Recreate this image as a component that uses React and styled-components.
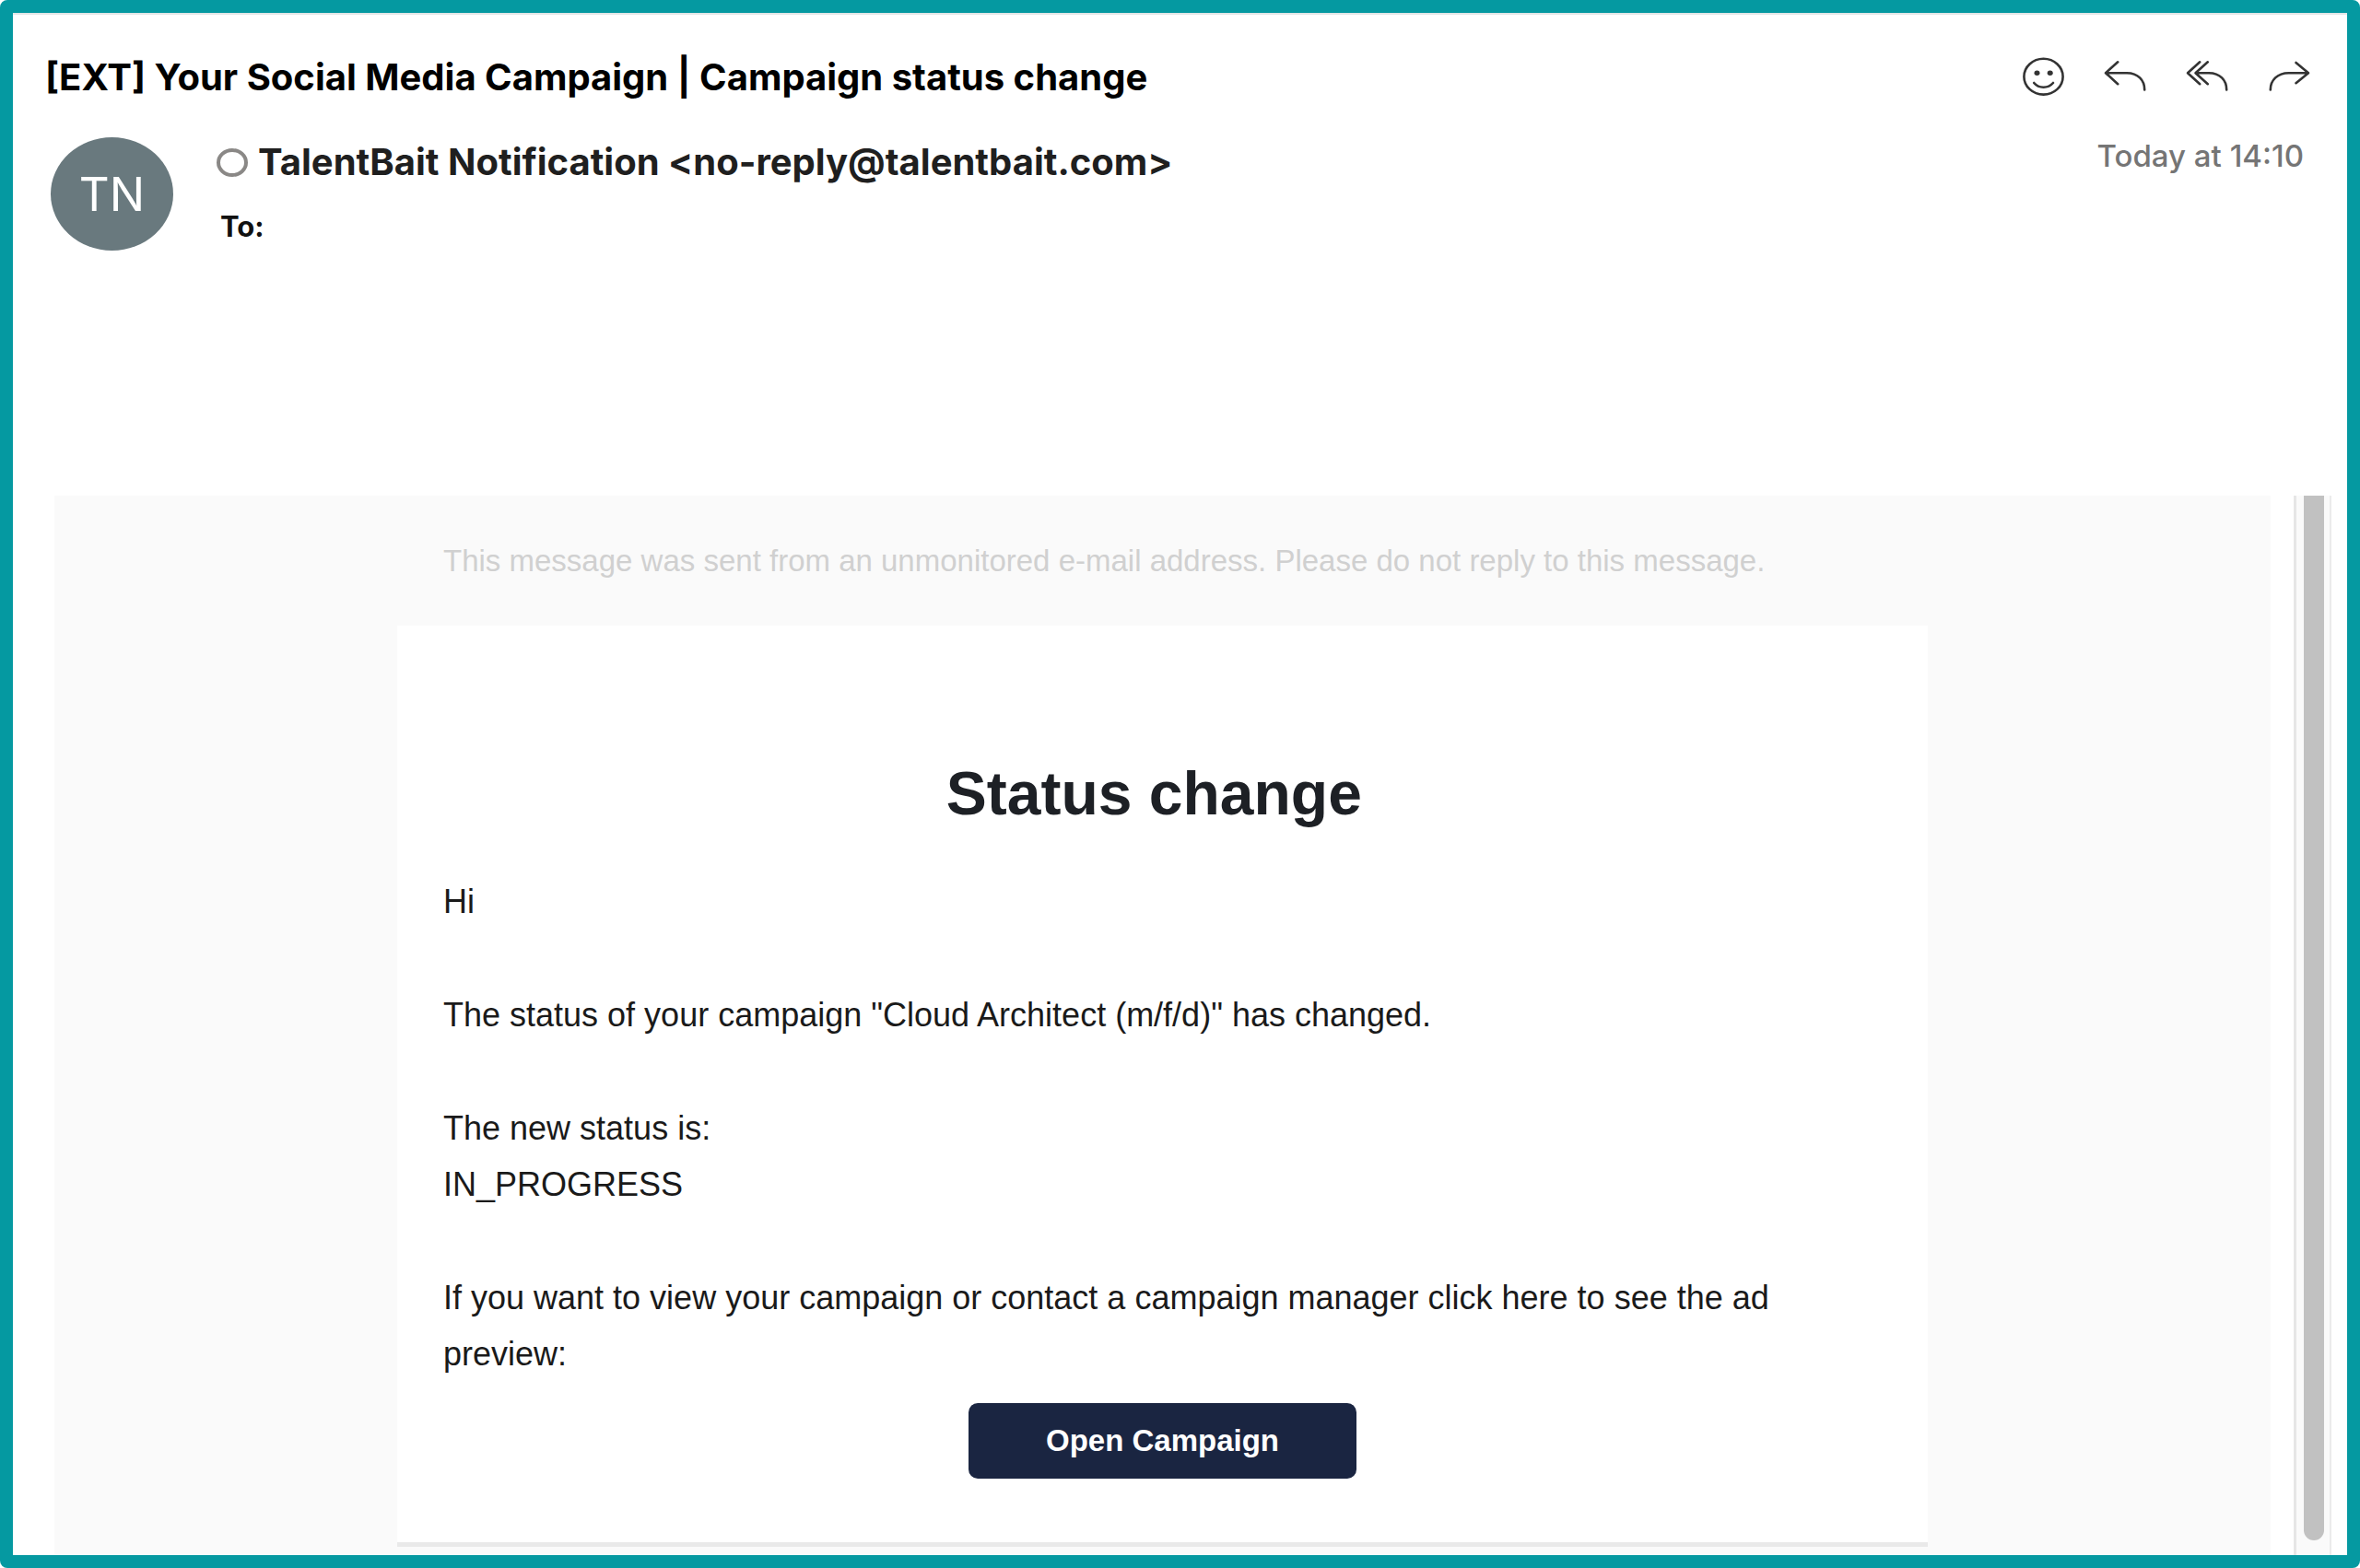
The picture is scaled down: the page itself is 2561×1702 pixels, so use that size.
import React from 'react';
import styled, { createGlobalStyle } from 'styled-components';

const GlobalStyle = createGlobalStyle`
  * {
    box-sizing: border-box;
  }
  body {
    margin: 0;
    background: #ffffff;
  }
`;

const uiFont = 'Inter, "Liberation Sans", sans-serif';
const mailFont = '"Liberation Sans", Arial, sans-serif';

const MailWindow = styled.div`
  min-height: 100vh;
  display: flex;
  flex-direction: column;
  border: 14px solid #0599a1;
  border-radius: 8px;
  box-shadow: inset 0 2px 0 #e2e6e6;
  background: #ffffff;
  font-family: ${uiFont};
`;

const Header = styled.header`
  padding: 46px 40px 266px 35px;
`;

const TitleBar = styled.div`
  display: flex;
  align-items: center;
  justify-content: space-between;
`;

const Subject = styled.h1`
  margin: 0;
  font-size: 40px;
  line-height: 48px;
  font-weight: 700;
  color: #000000;
`;

const Actions = styled.div`
  display: flex;
  gap: 43px;
`;

const ActionButton = styled.button`
  padding: 0;
  border: none;
  background: none;
  color: #333333;
  cursor: pointer;

  svg {
    display: block;
    width: 46px;
    height: 44px;
    fill: none;
    stroke: currentColor;
    stroke-width: 2.6;
    stroke-linecap: round;
    stroke-linejoin: round;
  }
`;

const SenderBar = styled.div`
  display: flex;
  align-items: flex-start;
  margin-top: 41px;
  padding: 0 7px 0 6px;
`;

const Avatar = styled.div`
  display: flex;
  align-items: center;
  justify-content: center;
  width: 133px;
  height: 123px;
  border-radius: 50%;
  background: #69797e;
  color: #ffffff;
  font-size: 51px;
`;

const SenderInfo = styled.div`
  flex: 1;
  display: flex;
  flex-direction: column;
  gap: 26px;
  padding-top: 3px;
  padding-left: 47px;
`;

const SenderLine = styled.div`
  display: flex;
  align-items: center;
  gap: 11px;
`;

const ReadMarker = styled.input`
  appearance: none;
  width: 34px;
  height: 31px;
  margin: 0;
  border: 4px solid #8a8886;
  border-radius: 50%;
  background: #ffffff;
  cursor: pointer;
`;

const Sender = styled.label`
  font-size: 40px;
  line-height: 48px;
  font-weight: 700;
  color: #1f1f1f;
`;

const Recipients = styled.div`
  padding-left: 4px;
  font-size: 31px;
  line-height: 40px;
  font-weight: 700;
  color: #111111;
`;

const SentAt = styled.time`
  font-size: 33px;
  line-height: 40px;
  font-weight: 500;
  color: #757575;
`;

const Reading = styled.main`
  flex: 1;
  display: flex;
  padding: 0 17px 0 45px;
`;

const Message = styled.article`
  flex: 1;
  padding: 47px 40px 9px;
  background: #fafafa;
  font-family: ${mailFont};
`;

const Column = styled.div`
  max-width: 1661px;
  margin: 0 auto;
`;

const Notice = styled.p`
  margin: 0 0 46px;
  padding: 0 50px;
  font-size: 33px;
  line-height: 48px;
  color: #d0d0d0;
`;

const Card = styled.section`
  padding: 142px 50px 69px;
  border-bottom: 5px solid #e9e9e9;
  background: #ffffff;
`;

const CardTitle = styled.h2`
  margin: 0 0 47px;
  font-size: 66px;
  line-height: 80px;
  text-align: center;
  color: #1d2025;
`;

const Paragraph = styled.p`
  margin: 0 0 ${(props) => (props.$last ? '23px' : '62px')};
  font-size: 36px;
  line-height: 61px;
  color: #1a1a1a;
`;

const OpenLink = styled.a`
  display: block;
  width: fit-content;
  margin: 0 auto;
  padding: 17px 84px;
  border-radius: 10px;
  background: #1a2541;
  color: #ffffff;
  font-size: 33px;
  line-height: 48px;
  font-weight: bold;
  text-decoration: none;
`;

const ScrollTrack = styled.div`
  width: 41px;
  margin-left: 25px;
  padding: 0 6px 16px 8px;
  border-left: 3px solid #e6e6e6;
  border-right: 2px solid #ebebeb;
  background: #fafafa;
`;

const ScrollThumb = styled.div`
  height: 100%;
  border-radius: 0 0 11px 11px;
  background: #c1c1c1;
`;

const SmileIcon = () => (
  <svg viewBox="0 0 46 44" aria-hidden="true">
    <ellipse cx="23.5" cy="21.2" rx="21.1" ry="19.4" />
    <ellipse cx="16.5" cy="17.3" rx="3" ry="2.7" fill="currentColor" stroke="none" />
    <ellipse cx="30.7" cy="17.3" rx="3" ry="2.7" fill="currentColor" stroke="none" />
    <path d="M13.2 28C18.5 34.3 28.5 34.3 34 28" />
  </svg>
);

const ReplyIcon = () => (
  <svg viewBox="0 0 46 44" aria-hidden="true">
    <path d="M15.2 5.3L2 17.2L15.2 29.2M2.5 17.2H25C37 17.2 44.2 25 44.2 35.5" />
  </svg>
);

const ReplyAllIcon = () => (
  <svg viewBox="0 0 46 44" aria-hidden="true">
    <path d="M15.2 5.3L2 17.2L15.2 29.2M23.8 5.3L10.5 17.2L23.8 29.2M10.8 17.2H25C37 17.2 44.2 25 44.2 35.5" />
  </svg>
);

const ForwardIcon = () => (
  <svg viewBox="0 0 46 44" aria-hidden="true">
    <path d="M30.5 6L44 17.2L30.5 28.2M43.5 17.2H22.5C10.5 17.2 2.8 25 2.8 35.5" />
  </svg>
);

const actions = [
  { label: 'React', Icon: SmileIcon },
  { label: 'Reply', Icon: ReplyIcon },
  { label: 'Reply all', Icon: ReplyAllIcon },
  { label: 'Forward', Icon: ForwardIcon },
];

const MailHeader = () => {
  return (
    <Header>
      <TitleBar>
        <Subject>[EXT] Your Social Media Campaign | Campaign status change</Subject>
        <Actions>
          {actions.map(({ label, Icon }) => (
            <ActionButton key={label} type="button" aria-label={label}>
              <Icon />
            </ActionButton>
          ))}
        </Actions>
      </TitleBar>
      <SenderBar>
        <Avatar>TN</Avatar>
        <SenderInfo>
          <SenderLine>
            <ReadMarker type="checkbox" id="read-marker" />
            <Sender htmlFor="read-marker">
              TalentBait Notification &lt;no-reply@talentbait.com&gt;
            </Sender>
          </SenderLine>
          <Recipients>To:</Recipients>
        </SenderInfo>
        <SentAt>Today at 14:10</SentAt>
      </SenderBar>
    </Header>
  );
}

const App = () => {
  return (
    <MailWindow>
      <GlobalStyle />
      <MailHeader />
      <Reading>
        <Message>
          <Column>
            <Notice>
              This message was sent from an unmonitored e-mail address. Please do not reply to this message.
            </Notice>
            <Card>
              <CardTitle>Status change&nbsp;</CardTitle>
              <Paragraph>Hi</Paragraph>
              <Paragraph>
                The status of your campaign "Cloud Architect (m/f/d)" has changed.
              </Paragraph>
              <Paragraph>
                The new status is:
                <br />
                IN_PROGRESS
              </Paragraph>
              <Paragraph $last>
                If you want to view your campaign or contact a campaign manager click here to see the ad preview:
              </Paragraph>
              <OpenLink href="#campaign">Open Campaign</OpenLink>
            </Card>
          </Column>
        </Message>
        <ScrollTrack>
          <ScrollThumb />
        </ScrollTrack>
      </Reading>
    </MailWindow>
  );
}

export default App;
